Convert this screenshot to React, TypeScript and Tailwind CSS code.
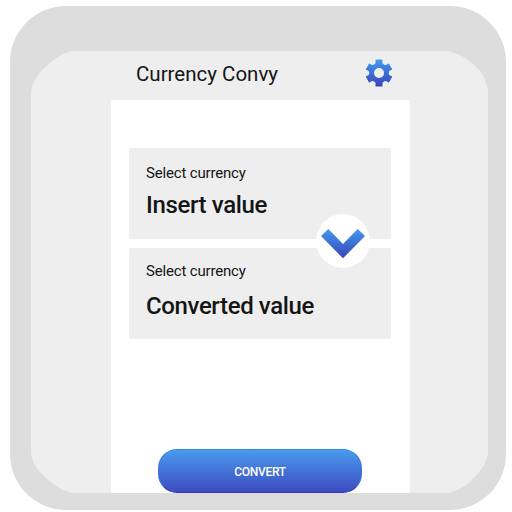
// Six tapered teeth around a ring, as points on a circle of the given radius.
function gearPoint(radius: number, degrees: number) {
  const a = (degrees * Math.PI) / 180;
  return `${(14 + radius * Math.sin(a)).toFixed(2)} ${(14 - radius * Math.cos(a)).toFixed(2)}`;
}

const gearOutline =
  'M' +
  [0, 60, 120, 180, 240, 300]
    .flatMap((a) => [
      gearPoint(9.9, a - 26),
      gearPoint(10.6, a - 19),
      gearPoint(13.9, a - 15),
      gearPoint(13.9, a + 15),
      gearPoint(10.6, a + 19),
      gearPoint(9.9, a + 26),
    ])
    .join('L') +
  'ZM14 9a5 5 0 1 0 0 10a5 5 0 1 0 0-10Z';

function GearIcon() {
  return (
    <svg viewBox="0 0 28 28" className="h-7 w-7 overflow-visible" aria-hidden="true">
      <defs>
        <linearGradient id="gear" x1="0" y1="0" x2="0" y2="1">
          <stop offset="0" stopColor="#429bf0" />
          <stop offset="1" stopColor="#3a43ba" />
        </linearGradient>
      </defs>
      <path
        d={gearOutline}
        fill="url(#gear)"
        fillRule="evenodd"
        stroke="#f8f8f5"
        strokeWidth="1.6"
        strokeLinejoin="round"
        paintOrder="stroke"
      />
    </svg>
  );
}

function ChevronIcon() {
  return (
    <svg viewBox="0 0 44 30" className="mt-1.5 h-[30px] w-11" aria-hidden="true">
      <defs>
        <linearGradient id="chevron" x1="0" y1="0" x2="0" y2="1">
          <stop offset="0" stopColor="#429bf0" />
          <stop offset="1" stopColor="#3a41b7" />
        </linearGradient>
      </defs>
      <path d="M7.3 0 22 15 36.7 0 44 7 22 29.3 0 7Z" fill="url(#chevron)" />
    </svg>
  );
}

export default function App() {
  return (
    <div className="h-[512px] w-[512px] overflow-hidden bg-white pt-1.5 pl-2.5 font-['Roboto',sans-serif] text-[#151515]">
      <div className="h-[504px] w-[496px] rounded-[56px] bg-[#dddddd] pt-[45px] pl-[21px]">
        <div className="flex h-[442px] w-[457px] bg-[#eeeeee] pl-20 [clip-path:path('M0_40_L2.5_31_Q9_20_16_14.5_Q28_3_41_0_H417_Q433_4_443_14_Q451_21_454_28_L457_39_V403_L454_413_Q448_422_441_429_Q431_439_417_442_H41_Q27_438_17_429_Q8_421_3_413_L0_403_Z')]">
          <div className="flex w-[299px] shrink-0 flex-col">
            <header className="flex h-[49px] shrink-0 items-center justify-between pr-[17px] pb-[5px] pl-[25px]">
              <h1 className="pt-px text-[20.5px] leading-6 whitespace-nowrap">Currency Convy</h1>
              <GearIcon />
            </header>
            <main className="flex grow flex-col items-center rounded-t-[2px] bg-white pt-[48px] pr-px">
              <div className="relative flex w-[262px] flex-col gap-[9px]">
                <section className="h-[91px] rounded-[2px] bg-[#eeeeee] pt-[15px] pl-[17px]">
                  <p className="text-[15px] leading-5 tracking-[-0.17px]">Select currency</p>
                  <p className="mt-2 text-[24px] leading-7 font-medium tracking-[-0.37px]">Insert value</p>
                </section>
                <section className="h-[91px] rounded-[2px] bg-[#eeeeee] pt-[13px] pl-[17px]">
                  <p className="text-[15px] leading-5 tracking-[-0.17px]">Select currency</p>
                  <p className="mt-[11px] text-[24px] leading-7 font-medium tracking-[-0.38px]">Converted value</p>
                </section>
                <div className="absolute top-[66px] left-[187px] flex h-[54px] w-[54px] items-center justify-center rounded-full bg-white">
                  <ChevronIcon />
                </div>
              </div>
              <button className="mt-auto h-11 w-[204px] rounded-[19px] border border-t-[#288ded] border-r-[#3970d9] border-b-[#323bb5] border-l-[#3970d9] bg-linear-to-b from-[#4a9aee] to-[#3d4bc0] pt-px text-[12px] font-medium tracking-[-0.3px] text-white">
                CONVERT
              </button>
            </main>
          </div>
        </div>
      </div>
    </div>
  );
}
